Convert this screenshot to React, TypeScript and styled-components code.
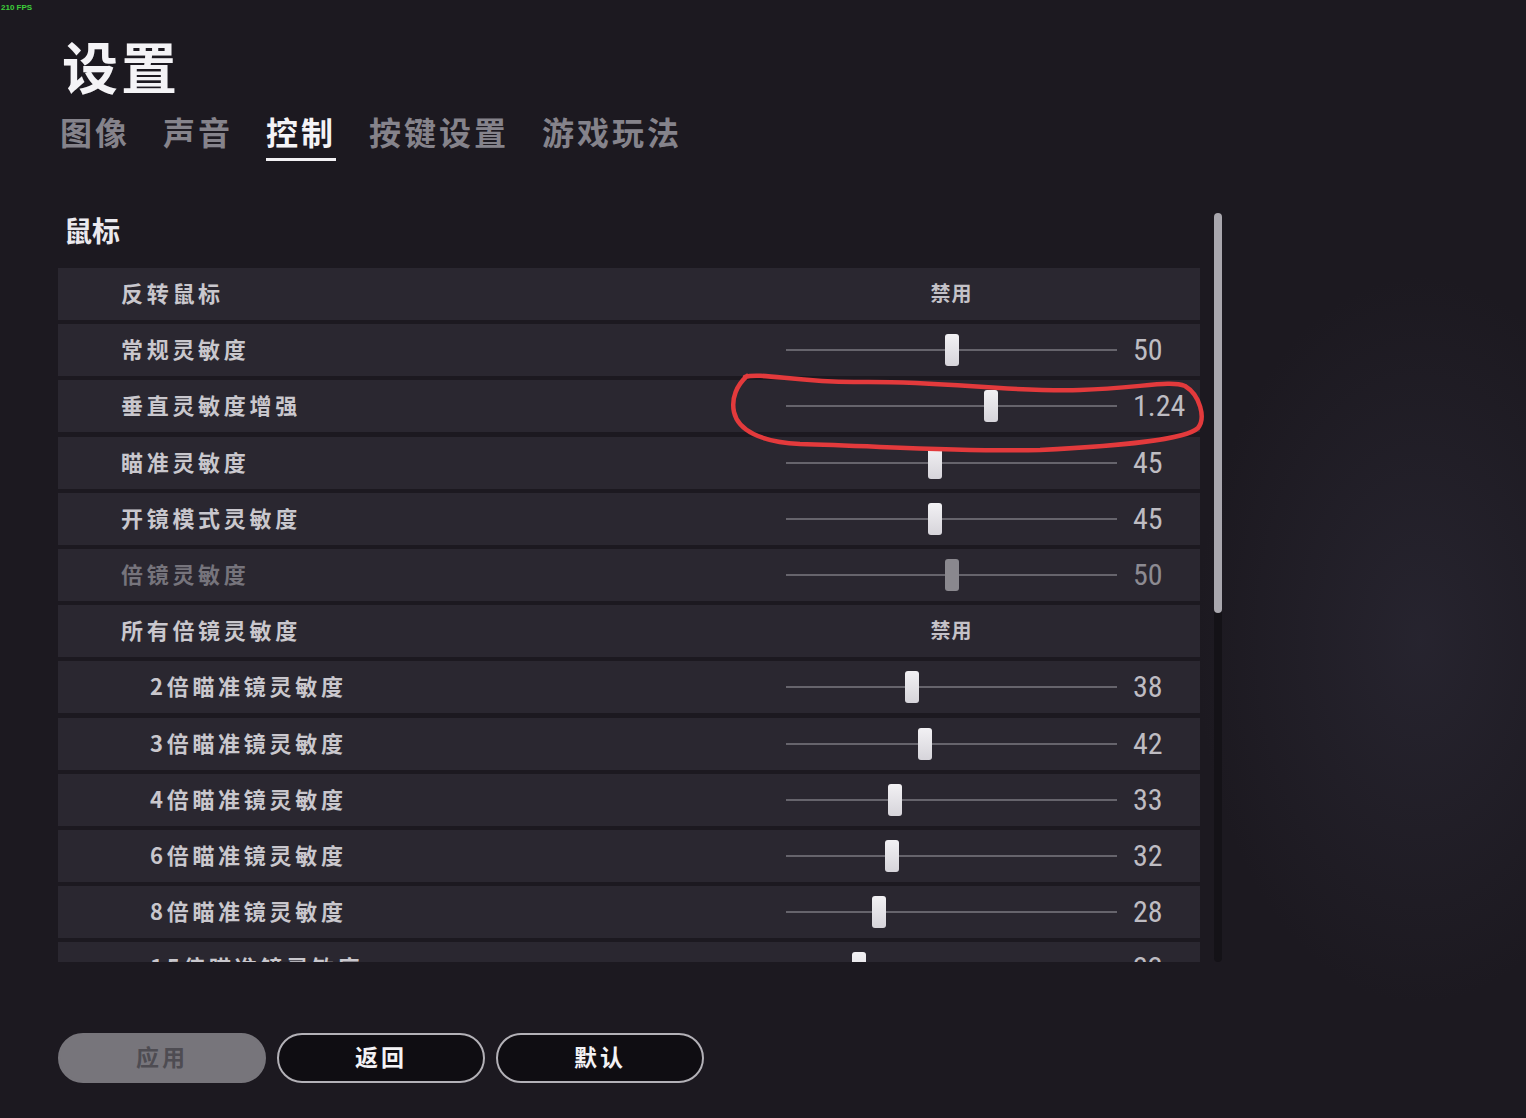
import React from 'react'
import styled, { createGlobalStyle, css } from 'styled-components'

const GlobalStyle = createGlobalStyle`
    html, body {
        margin: 0;
        padding: 0;
        background: #1c1920;
    }
`

const cjk = `"Noto Sans CJK SC", "Noto Sans", sans-serif`

const Page = styled.main`
    position: relative;
    min-height: 1118px;
    box-sizing: border-box;
    padding: 37px 0 0 58px;
    font-family: ${cjk};
    background:
        radial-gradient(ellipse 320px 520px at 1420px 640px, rgba(58, 56, 74, 0.35), transparent 70%),
        #1c1920;
    overflow: hidden;
`

const Fps = styled.div`
    position: absolute;
    top: 3px;
    left: 1px;
    font-family: "Liberation Sans", sans-serif;
    font-size: 8px;
    font-weight: 700;
    color: #3ccf3a;
`

const Title = styled.h1`
    margin: 0;
    padding-left: 4px;
    font-size: 56px;
    line-height: 1;
    font-weight: 700;
    letter-spacing: 3px;
    color: #f4f3f6;
`

const Tabs = styled.nav`
    display: flex;
    gap: 33px;
    margin-top: 22px;
    padding-left: 2px;
`

const Tab = styled.div<{ $active?: boolean }>`
    font-size: 32px;
    line-height: 1;
    font-weight: 700;
    letter-spacing: 3px;
    padding-bottom: 11px;
    border-bottom: 3px solid ${({ $active }) => ($active ? '#f2f1f4' : 'transparent')};
    color: ${({ $active }) => ($active ? '#f4f3f6' : '#85838b')};
`

const Body = styled.section`
    display: flex;
    align-items: flex-start;
    margin-top: 52px;
`

const Column = styled.div`
    width: 1142px;
`

const Heading = styled.h2`
    margin: 0 0 21px;
    padding-left: 6px;
    font-size: 28px;
    line-height: 34px;
    font-weight: 700;
    color: #ebe9ee;
`

const Rows = styled.div`
    display: flex;
    flex-direction: column;
    gap: 4.2px;
    height: 694px;
    overflow: hidden;
`

const Row = styled.div`
    display: grid;
    grid-template-columns: 728px 331px 1fr;
    align-items: center;
    flex: 0 0 52px;
    background: #2a2730;
`

const Label = styled.div<{ $sub?: boolean; $dim?: boolean }>`
    padding-left: ${({ $sub }) => ($sub ? 92 : 63)}px;
    padding-bottom: 4px;
    font-size: 22px;
    font-weight: 700;
    letter-spacing: 3.7px;
    color: ${({ $dim }) => ($dim ? '#76747c' : '#c9c7cd')};
`

const Toggle = styled.div`
    padding-bottom: 4px;
    text-align: center;
    font-size: 20px;
    font-weight: 700;
    letter-spacing: 1px;
    color: #c4c2c8;
`

const Track = styled.div`
    position: relative;
    height: 2px;
    background: #66646c;
`

const Thumb = styled.div<{ $dim?: boolean }>`
    position: absolute;
    top: -15px;
    width: 14px;
    height: 32px;
    margin-left: -7px;
    border-radius: 3px;
    ${({ $dim }) =>
        $dim
            ? css`background: #8a888e;`
            : css`background: linear-gradient(#f2f1f4, #d6d4da);`}
`

const Value = styled.div<{ $dim?: boolean }>`
    padding-left: 16px;
    font-family: "Roboto Condensed", "Liberation Sans Narrow", "DejaVu Sans Condensed", "Liberation Sans", sans-serif;
    font-size: 30px;
    line-height: 1;
    color: ${({ $dim }) => ($dim ? '#8d8b92' : '#bebcc2')};
`

const ScrollTrack = styled.div`
    width: 8px;
    height: 749px;
    margin-left: 14px;
    border-radius: 4px;
    background: #141217;
`

const ScrollThumb = styled.div`
    height: 400px;
    border-radius: 4px;
    background: #a9a7ae;
`

const Footer = styled.footer`
    display: flex;
    gap: 11px;
    margin-top: 71px;
`

const Button = styled.button<{ $disabled?: boolean }>`
    width: 208px;
    height: 50px;
    padding: 0 0 4px;
    border-radius: 25px;
    font-family: ${cjk};
    font-size: 23px;
    font-weight: 700;
    letter-spacing: 3px;
    cursor: pointer;
    ${({ $disabled }) =>
        $disabled
            ? css`
                  background: #77757b;
                  border: 2px solid #77757b;
                  color: #4e4c52;
              `
            : css`
                  background: #0f0d12;
                  border: 2px solid #b3b1b7;
                  color: #f3f2f5;
              `}
`

const Annotation = styled.svg`
    position: absolute;
    top: 0;
    left: 0;
    pointer-events: none;
`

type Setting = {
    label: string
    sub?: boolean
    dim?: boolean
    toggle?: string
    value?: string
    pos?: number
}

const settings: Setting[] = [
    { label: '反转鼠标', toggle: '禁用' },
    { label: '常规灵敏度', value: '50', pos: 0.5 },
    { label: '垂直灵敏度增强', value: '1.24', pos: 0.62 },
    { label: '瞄准灵敏度', value: '45', pos: 0.45 },
    { label: '开镜模式灵敏度', value: '45', pos: 0.45 },
    { label: '倍镜灵敏度', value: '50', pos: 0.5, dim: true },
    { label: '所有倍镜灵敏度', toggle: '禁用' },
    { label: '2倍瞄准镜灵敏度', value: '38', pos: 0.38, sub: true },
    { label: '3倍瞄准镜灵敏度', value: '42', pos: 0.42, sub: true },
    { label: '4倍瞄准镜灵敏度', value: '33', pos: 0.33, sub: true },
    { label: '6倍瞄准镜灵敏度', value: '32', pos: 0.32, sub: true },
    { label: '8倍瞄准镜灵敏度', value: '28', pos: 0.28, sub: true },
    { label: '15倍瞄准镜灵敏度', value: '22', pos: 0.22, sub: true },
]

const tabs = ['图像', '声音', '控制', '按键设置', '游戏玩法']

const SettingRow = ({ s }: { s: Setting }) => (
    <Row>
        <Label $sub={s.sub} $dim={s.dim}>{s.label}</Label>
        {s.toggle ? (
            <Toggle>{s.toggle}</Toggle>
        ) : (
            <Track>
                <Thumb $dim={s.dim} style={{ left: `${(s.pos ?? 0) * 100}%` }} />
            </Track>
        )}
        {s.value && <Value $dim={s.dim}>{s.value}</Value>}
    </Row>
)

const App = () => {
    return (
        <Page>
            <GlobalStyle />
            <Fps>210 FPS</Fps>
            <Title>设置</Title>
            <Tabs>
                {tabs.map((t) => (
                    <Tab key={t} $active={t === '控制'}>{t}</Tab>
                ))}
            </Tabs>
            <Body>
                <Column>
                    <Heading>鼠标</Heading>
                    <Rows>
                        {settings.map((s) => (
                            <SettingRow key={s.label} s={s} />
                        ))}
                    </Rows>
                </Column>
                <ScrollTrack>
                    <ScrollThumb />
                </ScrollTrack>
            </Body>
            <Footer>
                <Button $disabled>应用</Button>
                <Button>返回</Button>
                <Button>默认</Button>
            </Footer>
            <Annotation width="1526" height="1118" viewBox="0 0 1526 1118">
                <path
                    d="M 745 377 C 760 372, 800 383, 860 382 C 950 381, 1000 392, 1080 390 C 1140 388, 1170 380, 1185 386 C 1200 395, 1206 418, 1198 428 C 1185 440, 1120 446, 1040 450 C 960 452, 880 446, 800 444 C 760 442, 738 430, 734 412 C 731 398, 737 385, 747 376"
                    fill="none"
                    stroke="#e33a3c"
                    strokeWidth="4.5"
                    strokeLinecap="round"
                />
            </Annotation>
        </Page>
    )
}

export default App
